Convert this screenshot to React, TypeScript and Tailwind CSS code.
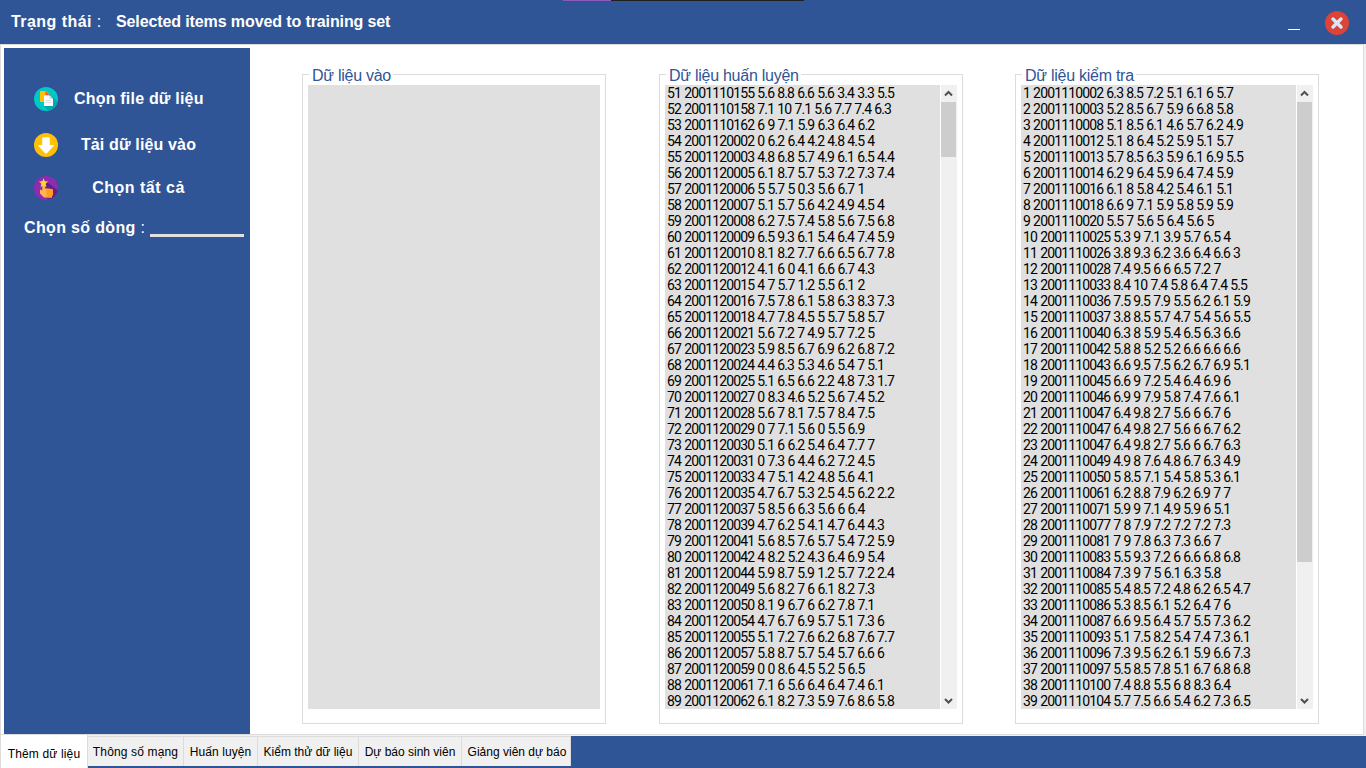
import React from "react";

const TRAIN = `51 2001110155 5.6 8.8 6.6 5.6 3.4 3.3 5.5
52 2001110158 7.1 10 7.1 5.6 7.7 7.4 6.3
53 2001110162 6 9 7.1 5.9 6.3 6.4 6.2
54 2001120002 0 6.2 6.4 4.2 4.8 4.5 4
55 2001120003 4.8 6.8 5.7 4.9 6.1 6.5 4.4
56 2001120005 6.1 8.7 5.7 5.3 7.2 7.3 7.4
57 2001120006 5 5.7 5 0.3 5.6 6.7 1
58 2001120007 5.1 5.7 5.6 4.2 4.9 4.5 4
59 2001120008 6.2 7.5 7.4 5.8 5.6 7.5 6.8
60 2001120009 6.5 9.3 6.1 5.4 6.4 7.4 5.9
61 2001120010 8.1 8.2 7.7 6.6 6.5 6.7 7.8
62 2001120012 4.1 6 0 4.1 6.6 6.7 4.3
63 2001120015 4 7 5.7 1.2 5.5 6.1 2
64 2001120016 7.5 7.8 6.1 5.8 6.3 8.3 7.3
65 2001120018 4.7 7.8 4.5 5 5.7 5.8 5.7
66 2001120021 5.6 7.2 7 4.9 5.7 7.2 5
67 2001120023 5.9 8.5 6.7 6.9 6.2 6.8 7.2
68 2001120024 4.4 6.3 5.3 4.6 5.4 7 5.1
69 2001120025 5.1 6.5 6.6 2.2 4.8 7.3 1.7
70 2001120027 0 8.3 4.6 5.2 5.6 7.4 5.2
71 2001120028 5.6 7 8.1 7.5 7 8.4 7.5
72 2001120029 0 7 7.1 5.6 0 5.5 6.9
73 2001120030 5.1 6 6.2 5.4 6.4 7.7 7
74 2001120031 0 7.3 6 4.4 6.2 7.2 4.5
75 2001120033 4 7 5.1 4.2 4.8 5.6 4.1
76 2001120035 4.7 6.7 5.3 2.5 4.5 6.2 2.2
77 2001120037 5 8.5 6 6.3 5.6 6 6.4
78 2001120039 4.7 6.2 5 4.1 4.7 6.4 4.3
79 2001120041 5.6 8.5 7.6 5.7 5.4 7.2 5.9
80 2001120042 4 8.2 5.2 4.3 6.4 6.9 5.4
81 2001120044 5.9 8.7 5.9 1.2 5.7 7.2 2.4
82 2001120049 5.6 8.2 7 6 6.1 8.2 7.3
83 2001120050 8.1 9 6.7 6 6.2 7.8 7.1
84 2001120054 4.7 6.7 6.9 5.7 5.1 7.3 6
85 2001120055 5.1 7.2 7.6 6.2 6.8 7.6 7.7
86 2001120057 5.8 8.7 5.7 5.4 5.7 6.6 6
87 2001120059 0 0 8.6 4.5 5.2 5 6.5
88 2001120061 7.1 6 5.6 6.4 6.4 7.4 6.1
89 2001120062 6.1 8.2 7.3 5.9 7.6 8.6 5.8`.split("\n");

const TEST = `1 2001110002 6.3 8.5 7.2 5.1 6.1 6 5.7
2 2001110003 5.2 8.5 6.7 5.9 6 6.8 5.8
3 2001110008 5.1 8.5 6.1 4.6 5.7 6.2 4.9
4 2001110012 5.1 8 6.4 5.2 5.9 5.1 5.7
5 2001110013 5.7 8.5 6.3 5.9 6.1 6.9 5.5
6 2001110014 6.2 9 6.4 5.9 6.4 7.4 5.9
7 2001110016 6.1 8 5.8 4.2 5.4 6.1 5.1
8 2001110018 6.6 9 7.1 5.9 5.8 5.9 5.9
9 2001110020 5.5 7 5.6 5 6.4 5.6 5
10 2001110025 5.3 9 7.1 3.9 5.7 6.5 4
11 2001110026 3.8 9.3 6.2 3.6 6.4 6.6 3
12 2001110028 7.4 9.5 6 6 6.5 7.2 7
13 2001110033 8.4 10 7.4 5.8 6.4 7.4 5.5
14 2001110036 7.5 9.5 7.9 5.5 6.2 6.1 5.9
15 2001110037 3.8 8.5 5.7 4.7 5.4 5.6 5.5
16 2001110040 6.3 8 5.9 5.4 6.5 6.3 6.6
17 2001110042 5.8 8 5.2 5.2 6.6 6.6 6.6
18 2001110043 6.6 9.5 7.5 6.2 6.7 6.9 5.1
19 2001110045 6.6 9 7.2 5.4 6.4 6.9 6
20 2001110046 6.9 9 7.9 5.8 7.4 7.6 6.1
21 2001110047 6.4 9.8 2.7 5.6 6 6.7 6
22 2001110047 6.4 9.8 2.7 5.6 6 6.7 6.2
23 2001110047 6.4 9.8 2.7 5.6 6 6.7 6.3
24 2001110049 4.9 8 7.6 4.8 6.7 6.3 4.9
25 2001110050 5 8.5 7.1 5.4 5.8 5.3 6.1
26 2001110061 6.2 8.8 7.9 6.2 6.9 7 7
27 2001110071 5.9 9 7.1 4.9 5.9 6 5.1
28 2001110077 7 8 7.9 7.2 7.2 7.2 7.3
29 2001110081 7 9 7.8 6.3 7.3 6.6 7
30 2001110083 5.5 9.3 7.2 6 6.6 6.8 6.8
31 2001110084 7.3 9 7 5 6.1 6.3 5.8
32 2001110085 5.4 8.5 7.2 4.8 6.2 6.5 4.7
33 2001110086 5.3 8.5 6.1 5.2 6.4 7 6
34 2001110087 6.6 9.5 6.4 5.7 5.5 7.3 6.2
35 2001110093 5.1 7.5 8.2 5.4 7.4 7.3 6.1
36 2001110096 7.3 9.5 6.2 6.1 5.9 6.6 7.3
37 2001110097 5.5 8.5 7.8 5.1 6.7 6.8 6.8
38 2001110100 7.4 8.8 5.5 6 8 8.3 6.4
39 2001110104 5.7 7.5 6.6 5.4 6.2 7.3 6.5`.split("\n");

function FilesIcon() {
  return (
    <svg className="size-6 shrink-0" viewBox="0 0 24 24">
      <circle cx="12" cy="12" r="12" fill="#00c8c8" />
      <path d="M19 10l4.600 4.600A12 12 0 0 1 14.500 23.700L10 19z" fill="#00a8b0" />
      <path d="M6 4h6l2.500 2.500V15H6z" fill="#ffc107" />
      <path d="M11.500 4l3.500 4h-3.500z" fill="#f4511e" />
      <path d="M10 8.500h5.500L19 12v7h-9z" fill="#fff" />
      <path d="M15.500 8.500L19 12h-3.500z" fill="#cfd8dc" />
      <path d="M11.500 13.500h6M11.500 15.500h6" stroke="#d5dce6" strokeWidth="1" />
    </svg>
  );
}

function DownloadIcon() {
  return (
    <svg className="size-6 shrink-0" viewBox="0 0 24 24">
      <circle cx="12" cy="12" r="12" fill="#ffc107" />
      <path d="M9 4.300h6q.8 0 .8.800V12h3.400q1.200 0 .4 1l-6.700 7.300q-.9.900-1.800 0L4.400 13q-.8-1 .4-1h3.400V5.100q0-.8.8-.8z" fill="#fff" />
    </svg>
  );
}

function SelectAllIcon() {
  return (
    <svg className="size-6 shrink-0" viewBox="0 0 24 24">
      <circle cx="12" cy="12" r="12" fill="#8e2bb0" />
      <path d="M12.500 5.500l11.300 9A12 12 0 0 1 15 23.600L9 20z" fill="#64208a" />
      <path d="M8.300 8q1.500-.8 2.900 0v4.600l6.400.3q1.400.2 1.400 1.700v3.300q0 1.200-.9 1.900l-.3 1.600H10L6 17.500V13.500l2.300 1z" fill="#ffb74d" />
      <path d="M12.500 12.600l5.100.3q1.400.2 1.400 1.700v3.300q0 1.200-.9 1.900l-.3 1.600h-5.300z" fill="#ff9d1c" />
      <path d="M9.500 2.200l1.300 3 3.300.3-2.500 2.200.8 3.200-2.900-1.700-2.900 1.700.8-3.200L5 5.500l3.300-.3z" fill="#fdd835" />
    </svg>
  );
}

function Chevron({ down = false }: { down?: boolean }) {
  return (
    <svg className="-ml-px size-[17px]" viewBox="0 0 17 17">
      <path
        d={down ? "M5 7l3.500 3.500L12 7" : "M5 10.500L8.500 7l3.500 3.500"}
        fill="none"
        stroke="#505050"
        strokeWidth="2"
      />
    </svg>
  );
}

function DataBox({ title, rows, thumb }: { title: string; rows?: string[]; thumb?: string }) {
  return (
    <section className="relative h-[650px] w-[304px] border border-[#dcdcdc] pt-[10px] pl-[5px]">
      <h2 className="absolute -top-[9px] left-[6px] h-[19px] bg-white pr-[2px] pl-[3px] text-[16px] leading-[20px] tracking-[-0.260px] whitespace-nowrap text-[#2f5597]">
        {title}
      </h2>
      <div className="flex h-[624px] w-[292px] overflow-hidden bg-[#e0e0e0]">
        {rows && (
          <>
            <ul className="w-[275px] pl-[2px] font-[Roboto,sans-serif] text-[14px] leading-[16px] tracking-[-0.860px] [word-spacing:0.500px] text-black">
              {rows.map((row) => (
                <li key={row} className="h-4 whitespace-nowrap">{row}</li>
              ))}
            </ul>
            <div className="flex w-[17px] flex-col justify-between border-l border-white bg-[#f0f0f0]">
              <div>
                <Chevron />
                <div className={`w-[15px] bg-[#cdcdcd] ${thumb}`} />
              </div>
              <Chevron down />
            </div>
          </>
        )}
      </div>
    </section>
  );
}

const TABS = [
  { label: "Thông số mạng", style: "w-[96px] tracking-[0.150px]" },
  { label: "Huấn luyện", style: "w-[74px] tracking-[0.100px]" },
  { label: "Kiểm thử dữ liệu", style: "w-[101px]" },
  { label: "Dự báo sinh viên", style: "w-[103px]" },
  { label: "Giảng viên dự báo", style: "w-[109px] pl-[2px]" },
];

export default function App() {
  return (
    <div className="flex h-[768px] w-[1366px] flex-col overflow-hidden bg-[#2f5597] font-['Liberation_Sans',Arial,sans-serif]">
      <header className="relative flex h-11 shrink-0 items-center pl-[11px] font-bold text-white">
        <div className="absolute top-0 left-[563px] flex h-px">
          <span className="w-12 bg-[#8a5cc0]" />
          <span className="w-[193px] bg-[#202020]" />
        </div>
        <span className="w-[105px] text-[16px] leading-5 tracking-[0.450px]">
          Trạng thái <span className="font-normal">:</span>
        </span>
        <span className="text-[16px] leading-5 tracking-[-0.110px]">Selected items moved to training set</span>
        <button className="mt-[15px] ml-auto h-px w-3 bg-white" aria-label="Minimize" />
        <button className="mt-[2px] mr-[17px] ml-[25px]" aria-label="Close">
          <svg className="size-6" viewBox="0 0 24 24">
            <circle cx="12" cy="12" r="12" fill="#db4437" />
            <path d="M8 8l8 8M16 8l-8 8" stroke="#dce6f5" strokeWidth="3.400" strokeLinecap="round" />
          </svg>
        </button>
      </header>

      <main className="flex h-[691px] w-full shrink-0 border-r-2 border-[#f0f0f0] bg-white">
        <div className="flex w-full border border-[#dcdcdc] pt-[3px] pl-[3px]">
          <aside className="h-[686px] w-[246px] shrink-0 bg-[#2f5597] text-[16px] leading-5 font-bold text-white">
            <button className="mt-[39px] ml-[30px] flex h-6 items-center">
              <FilesIcon />
              <span className="ml-4 w-[129px] text-center tracking-[0.200px] whitespace-nowrap">Chọn file dữ liệu</span>
            </button>
            <button className="mt-[22px] ml-[30px] flex h-6 items-center">
              <DownloadIcon />
              <span className="ml-4 w-[129px] text-center tracking-[0.150px] whitespace-nowrap">Tải dữ liệu vào</span>
            </button>
            <button className="mt-[19px] ml-[30px] flex h-6 items-center">
              <SelectAllIcon />
              <span className="ml-4 w-[129px] text-center tracking-[0.500px] whitespace-nowrap">Chọn tất cả</span>
            </button>
            <label className="mt-[18px] ml-5 flex h-5 items-center whitespace-nowrap">
              <span className="w-[126px] tracking-[0.350px]">
                Chọn số dòng <span className="font-normal">:</span>
              </span>
              <span className="mt-[15px] h-[3px] w-[94px] bg-[#e0e0e0]" />
            </label>
          </aside>
          <div className="mt-[26px] ml-[52px] flex">
            <DataBox title="Dữ liệu vào" />
            <div className="ml-[53px] flex gap-[52px]">
              <DataBox title="Dữ liệu huấn luyện" rows={TRAIN} thumb="h-[55px]" />
              <DataBox title="Dữ liệu kiểm tra" rows={TEST} thumb="h-[460px]" />
            </div>
          </div>
        </div>
      </main>

      <nav className="flex h-[33px] shrink-0 text-[12px] leading-4 text-black">
        <button className="flex h-[33px] w-[88px] shrink-0 items-center justify-center border-r border-l border-[#dcdcdc] bg-white pt-[4px] tracking-[0.150px] whitespace-nowrap">
          Thêm dữ liệu
        </button>
        <div className="flex h-[31px] grow border-t border-[#f0f0f0]">
          {TABS.map((tab) => (
            <button
              key={tab.label}
              className={`flex h-[30px] shrink-0 items-center justify-center border-t border-r border-[#dcdcdc] bg-[#f0f0f0] whitespace-nowrap ${tab.style}`}
            >
              {tab.label}
            </button>
          ))}
        </div>
      </nav>
    </div>
  );
}
